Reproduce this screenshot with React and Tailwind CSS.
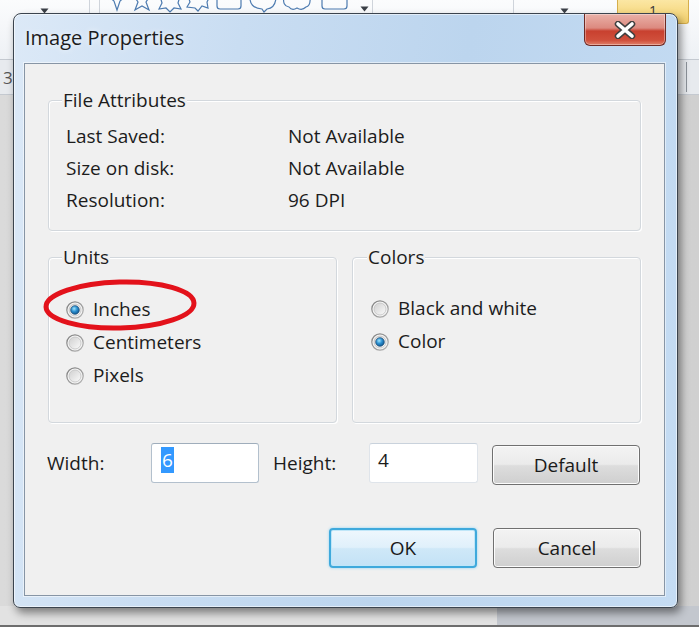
import React from "react";

const FONT = "font-['Open_Sans','Noto_Sans',sans-serif]";

function Radio({ checked, id }) {
  return (
    <svg width="18" height="18" viewBox="0 0 18 18" className="shrink-0">
      <defs>
        <linearGradient id={`ring-${id}`} x1="0" y1="0" x2="1" y2="1">
          <stop offset="0" stopColor="#7e7e7e" />
          <stop offset="1" stopColor="#b4b4b4" />
        </linearGradient>
        <linearGradient id={`fill-${id}`} x1="0" y1="0" x2="1" y2="1">
          <stop offset="0" stopColor="#cfcfcf" />
          <stop offset="1" stopColor="#fbfbfb" />
        </linearGradient>
        <radialGradient id={`dot-${id}`} cx="0.4" cy="0.35" r="0.75">
          <stop offset="0" stopColor="#9fe6ff" />
          <stop offset="0.45" stopColor="#2b8fd0" />
          <stop offset="1" stopColor="#0c4b80" />
        </radialGradient>
      </defs>
      <circle cx="9" cy="9" r="8.2" fill="#f4f4f4" stroke={`url(#ring-${id})`} strokeWidth="1.2" />
      <circle cx="9" cy="9" r="6" fill={`url(#fill-${id})`} stroke="#c2c2c2" strokeWidth="0.8" />
      {checked && (
        <circle cx="9" cy="9" r="4.3" fill={`url(#dot-${id})`} stroke="#1b4d78" strokeWidth="0.7" />
      )}
    </svg>
  );
}

function GroupBox({ label, labelLeft, className, children }) {
  return (
    <div
      className={`relative rounded-[4px] border border-[#d3d8dd] shadow-[inset_1px_1px_0_#ffffff,1px_1px_0_#ffffff] ${className}`}
    >
      <span
        className={`absolute top-[-13px] bg-[#f0f0f0] px-[1px] leading-[24px] ${labelLeft}`}
      >
        {label}
      </span>
      {children}
    </div>
  );
}

function WinButton({ children, primary }) {
  return (
    <button
      className={
        primary
          ? "h-[40px] w-[148px] rounded-[4px] border-2 border-[#3fa9dc] bg-[linear-gradient(#eef7fd_0%,#e0f0fb_48%,#cfe8f8_52%,#c3e2f6_100%)] text-[#1a1a1a] shadow-[inset_0_0_0_1px_#bfe6f8,0_0_3px_#8fd3f3]"
          : "h-[40px] w-[148px] rounded-[4px] border border-[#707070] bg-[linear-gradient(#f3f3f3_0%,#ebebeb_48%,#dddddd_52%,#cfcfcf_100%)] text-[#1a1a1a] shadow-[inset_0_0_0_1px_#fcfcfc]"
      }
    >
      {children}
    </button>
  );
}

function ShapeStrip() {
  return (
    <svg width="250" height="13" viewBox="0 0 250 13" fill="none" stroke="#4d7bb0" strokeWidth="1.2">
      {/* lower halves of the shape gallery entries */}
      <path d="M4 -4 L10 1 L13 10 L16 1 L22 -4" />
      <path d="M30 -4 L34 2 L31 10 L38 6 L45 10 L42 2 L46 -4" />
      <path d="M56 -4 L58 3 L55 9 L62 8 L66 12 L70 8 L77 9 L74 3 L76 -4" />
      <path d="M84 -4 L86 2 L83 7 L91 8 L94 11 L98 6 L104 8 L103 2 L106 -4" />
      <path d="M113 -4 L113 6 Q113 9 116 9 L134 9 Q137 9 137 6 L137 -4" />
      <path d="M146 -4 Q145 8 158 9 L160 12 L163 9 Q172 8 172 -4" />
      <path d="M180 -4 Q178 6 185 7 Q188 11 193 8 Q198 11 202 7 Q207 6 206 -4" />
      <path d="M218 -4 L218 6 Q218 9 221 9 L240 9 Q243 9 243 6 L243 -4" />
    </svg>
  );
}

function Caret() {
  return (
    <svg width="9" height="6" viewBox="0 0 9 6">
      <path d="M0.5 0.5 L8.5 0.5 L4.5 5.5 Z" fill="#3a3f46" />
    </svg>
  );
}

export default function App() {
  return (
    <div className={`relative h-[627px] w-[699px] overflow-hidden bg-[#d9dce1] ${FONT}`}>
      {/* Paint window behind the dialog */}
      <div className="flex h-[60px] border-b border-[#c4c9d0] bg-[linear-gradient(#fbfcfd,#eef1f5)]">
        <div className="flex w-[90px] justify-center border-r border-[#cfd4db] pt-[8px]">
          <Caret />
        </div>
        <div className="w-[10px] border-r border-[#cfd4db]" />
        <div className="w-[256px] pl-[4px]">
          <ShapeStrip />
        </div>
        <div className="flex w-[16px] justify-center pt-[6px]">
          <Caret />
        </div>
        <div className="w-[142px] border-x border-[#cfd4db]" />
        <div className="flex w-[100px] justify-center pt-[8px]">
          <Caret />
        </div>
        <div className="ml-[3px] h-[24px] w-[72px] rounded-b-[3px] border border-t-0 border-[#d5ae4c] bg-[linear-gradient(#fbe7a4,#f2cf6b)] text-center text-[14px] leading-[22px] text-[#3a3a3a]">
          1
        </div>
      </div>
      <div className="flex h-[35px] border-b border-[#c4c9d0] bg-[#e7eaee]">
        <span className="pl-[3px] pt-[8px] text-[17px] leading-[20px] text-[#555]">3</span>
        <div className="ml-auto mr-[12px] mt-[2px] h-[30px] border-l border-[#8d939a]" />
      </div>
      <div className="h-[511px] bg-[linear-gradient(90deg,#dadada,#d0d0d0)]" />
      <div className="flex h-[21px]">
        <div className="w-[497px] border-b-2 border-[#6d6d6d] bg-[#e2e2e2]" />
        <div className="flex-1 border-b-2 border-[#6d6d6d] bg-[#c3c7ce]" />
      </div>

      {/* Image Properties dialog */}
      <div className="absolute left-[13px] top-[13px] flex h-[595px] w-[665px] flex-col rounded-t-[8px] rounded-b-[7px] border border-[#3b444e] bg-[linear-gradient(100deg,#dce9f7_0%,#c9ddf2_30%,#bcd5ee_60%,#c5dcf3_100%)] pb-[11px] pl-[10px] pr-[12px] shadow-[3px_5px_9px_rgba(0,0,0,0.45),inset_0_0_0_1px_rgba(255,255,255,0.55)]">
        <div className="flex h-[49px] shrink-0 items-start">
          <span className="pl-[1px] pt-[11px] text-[20px] leading-[26px] text-[#1c1c1c] [text-shadow:0_0_6px_rgba(255,255,255,0.9)]">
            Image Properties
          </span>
          <div className="ml-auto mr-[-1px] flex h-[32px] w-[82px] items-center justify-center rounded-b-[6px] border border-t-0 border-[#6e2a24] bg-[linear-gradient(#eab1a8_0%,#dc8a80_45%,#c8402f_55%,#d0503c_85%,#e0806a_100%)] shadow-[inset_0_0_0_1px_rgba(255,255,255,0.35)]">
            <svg width="24" height="18" viewBox="0 0 24 18">
              <path d="M5 3 L19 15 M19 3 L5 15" stroke="#3f3f3f" strokeWidth="6.5" strokeLinecap="round" />
              <path d="M5 3 L19 15 M19 3 L5 15" stroke="#ffffff" strokeWidth="3.6" strokeLinecap="round" />
            </svg>
          </div>
        </div>

        <div className="flex-1 border border-[#8795a5] bg-[#f0f0f0] px-[23px] pt-[36px] text-[19px] text-[#1c1c1c] shadow-[0_0_0_1px_rgba(255,255,255,0.5)]">
          <GroupBox label="File Attributes" labelLeft="left-[13px]" className="h-[131px]">
            <div className="grid grid-cols-[222px_1fr] pl-[17px] pt-[19px] leading-[32px]">
              <span>Last Saved:</span>
              <span>Not Available</span>
              <span>Size on disk:</span>
              <span>Not Available</span>
              <span>Resolution:</span>
              <span>96 DPI</span>
            </div>
          </GroupBox>

          <div className="mt-[26px] grid grid-cols-2 gap-[15px]">
            <GroupBox label="Units" labelLeft="left-[13px]" className="h-[166px]">
              <div className="flex flex-col pl-[17px] pt-[35px] leading-[33px]">
                <label className="flex items-center gap-[9px]">
                  <Radio checked id="in" />
                  <span>Inches</span>
                </label>
                <label className="flex items-center gap-[9px]">
                  <Radio id="cm" />
                  <span>Centimeters</span>
                </label>
                <label className="flex items-center gap-[9px]">
                  <Radio id="px" />
                  <span>Pixels</span>
                </label>
              </div>
              {/* red marker ring drawn around the Inches option */}
              <svg
                className="pointer-events-none absolute left-[-8px] top-[19px]"
                width="160"
                height="58"
                viewBox="0 0 160 58"
              >
                <ellipse
                  cx="79"
                  cy="28"
                  rx="74"
                  ry="23"
                  fill="none"
                  stroke="#e3121b"
                  strokeWidth="5"
                  transform="rotate(-1.5 79 28)"
                />
              </svg>
            </GroupBox>

            <GroupBox label="Colors" labelLeft="left-[14px]" className="h-[166px]">
              <div className="flex flex-col pl-[18px] pt-[34px] leading-[33px]">
                <label className="flex items-center gap-[9px]">
                  <Radio id="bw" />
                  <span>Black and white</span>
                </label>
                <label className="flex items-center gap-[9px]">
                  <Radio checked id="col" />
                  <span>Color</span>
                </label>
              </div>
            </GroupBox>
          </div>

          <div className="mt-[20px] flex items-start">
            <span className="ml-[-1px] w-[104px] leading-[40px]">Width:</span>
            <div className="h-[40px] w-[108px] rounded-[3px] border border-[#b3c0cd] border-t-[#9fadbb] bg-white pl-[9px] pt-[4px] leading-[25px]">
              <span className="bg-[#3399ff] px-[1px] text-white">6</span>
            </div>
            <span className="ml-[14px] w-[96px] leading-[40px]">Height:</span>
            <div className="h-[40px] w-[109px] rounded-[3px] border border-[#dfe4ea] border-t-[#c9d2dc] bg-white pl-[8px] pt-[4px] leading-[25px]">
              4
            </div>
            <div className="ml-[14px] mt-[2px]">
              <WinButton>Default</WinButton>
            </div>
          </div>

          <div className="mt-[43px] flex justify-end gap-[16px]">
            <WinButton primary>OK</WinButton>
            <WinButton>Cancel</WinButton>
          </div>
        </div>
      </div>
    </div>
  );
}
